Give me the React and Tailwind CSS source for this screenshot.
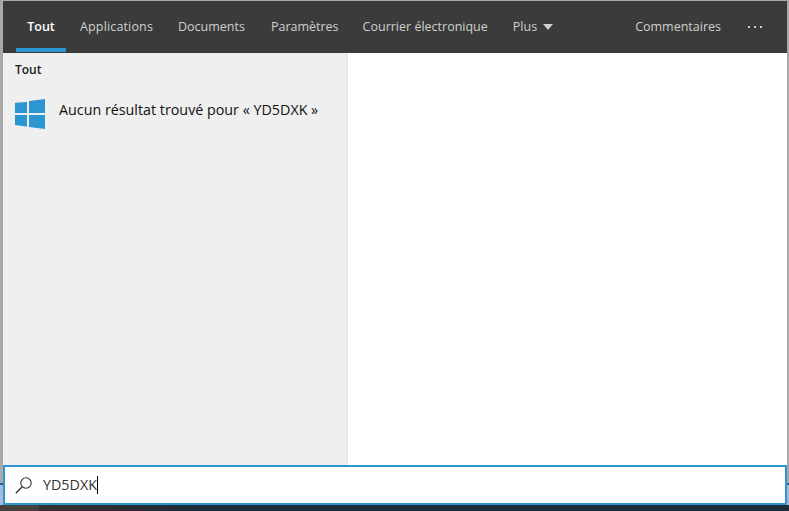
import React from 'react';

const font = "font-['Open_Sans','Noto_Sans',sans-serif]";

const tabs = [
  { label: 'Applications', cls: 'ml-[14px] tracking-[0.15px]' },
  { label: 'Documents', cls: 'ml-[25px]' },
  { label: 'Paramètres', cls: 'ml-[26px]' },
  { label: 'Courrier électronique', cls: 'ml-[24px]' },
];

const WindowsLogo = () => (
  <svg width="30" height="30" viewBox="0 0 30 30" fill="#2b96d2" className="shrink-0 mt-[5px]">
    <path d="M0 3.7 L12 3 V14 H0 Z" />
    <path d="M14 2 L30 0 V14 H14 Z" />
    <path d="M0 16 H12 V27.7 L0 26 Z" />
    <path d="M14 16 H30 V30 L14 28 Z" />
  </svg>
);

const SearchIcon = () => (
  <svg width="18" height="18" viewBox="0 0 18 18" fill="none" stroke="#333" strokeWidth="1.1">
    <circle cx="11" cy="7" r="5.2" />
    <path d="M7.2 10.8 L0.8 17.2" strokeWidth="1.3" />
  </svg>
);

export default function App() {
  return (
    <div className={`w-[789px] h-[511px] flex flex-col bg-[linear-gradient(to_bottom,#a9a9a9_483px,#3a5a8a_483px,#3a5a8a_485px,#a3bcd8_485px)] overflow-hidden ${font}`}>
      <div className="flex-1 min-h-0 flex flex-col mt-[1px] ml-[3px] mr-[2px]">
        {/* Top tabs */}
        <div className="h-[52px] shrink-0 bg-[#3b3b3b] flex items-stretch text-[12.5px] text-[#cfcfcf]">
          <div className="ml-[13px] mb-[1px] w-[50px] flex items-center justify-center border-b-[4px] border-[#2b96d2] pt-[6px] font-semibold text-white">
            Tout
          </div>
          {tabs.map((t) => (
            <div key={t.label} className={`${t.cls} flex items-center`}>
              {t.label}
            </div>
          ))}
          <div className="ml-[25px] flex items-center gap-[6px]">
            Plus
            <span className="w-0 h-0 border-x-[5.5px] border-x-transparent border-t-[6px] border-t-[#cfcfcf]" />
          </div>
          <div className="ml-auto flex items-center">Commentaires</div>
          <div className="ml-[27px] mr-[25px] flex items-center gap-[4px]">
            <span className="w-[2px] h-[2px] bg-[#cfcfcf]" />
            <span className="w-[2px] h-[2px] bg-[#cfcfcf]" />
            <span className="w-[2px] h-[2px] bg-[#cfcfcf]" />
          </div>
        </div>

        {/* Results */}
        <div className="flex-1 min-h-0 flex">
          <div className="w-[345px] shrink-0 bg-[#efefef] border-r border-[#e4e4e4] px-[12px]">
            <div className="mt-[9px] text-[12px] font-semibold leading-[16px] text-[#1a1a1a]">Tout</div>
            <div className="mt-[16px] flex items-start gap-[14px]">
              <WindowsLogo />
              <span className="mt-[6px] text-[14.3px] leading-[20px] text-[#111]">Aucun résultat trouvé pour « YD5DXK »</span>
            </div>
          </div>
          <div className="flex-1 bg-white" />
        </div>

        {/* Search box */}
        <div className="h-[40px] shrink-0 bg-white border-2 border-[#2b96d2] flex items-center pl-[10px] text-[14.3px] text-[#333]">
          <SearchIcon />
          <span className="ml-[10px]">YD5DXK</span>
          <span className="w-px h-[18px] bg-black" />
        </div>
      </div>
      <div className="h-[6px] shrink-0 bg-[linear-gradient(to_right,#45423b_0px,#45423b_38px,#33322f_40px,#2c2e30_110px,#1d2c38_200px)]" />
    </div>
  );
}
